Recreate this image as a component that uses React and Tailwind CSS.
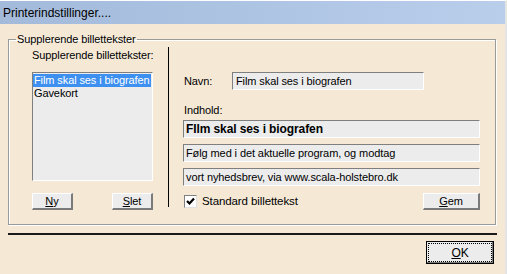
import React from 'react';

const font = { fontFamily: '"Liberation Sans", Arial, sans-serif' };

const sunken = 'border border-t-[#7f7f7f] border-l-[#7f7f7f] border-b-white border-r-white bg-[#ececec]';
const raised = 'border-t border-l border-t-white border-l-white border-r-2 border-b-2 border-r-[#7a7a7a] border-b-[#7a7a7a] bg-[#ececec]';

const Field = ({ children, bold }) => (
  <div className={`h-[18px] w-full flex items-center px-[2px] whitespace-nowrap ${sunken} ${bold ? 'font-bold text-[12px]' : ''}`}>
    {children}
  </div>
);

const Button = ({ mnemonic, rest, className = '' }) => (
  <button className={`h-[17px] flex items-center justify-center leading-none ${raised} ${className}`}>
    <span className="underline underline-offset-1">{mnemonic}</span>
    {rest}
  </button>
);

export default function App() {
  return (
    <div className="w-[507px] h-[274px] bg-[#f5e9d6] text-[11px] tracking-[-0.1px] text-black flex flex-col border-t border-t-white border-r-2 border-r-[#e4e4e4] overflow-hidden" style={font}>
      <div className="h-[23px] shrink-0 flex items-center pl-[3px] text-[12px] tracking-normal bg-gradient-to-r from-[#a4badb] to-[#b8ceeb]">
        Printerindstillinger....
      </div>

      <div className="pl-[8px] pt-[8px]">
        <fieldset className="w-[488px] h-[193px] border border-[#9a9a9a] shadow-[inset_1px_1px_0_#fff,1px_1px_0_#fff]">
          <legend className="ml-[7px] px-[1px] leading-[14px]">Supplerende billettekster</legend>
          <div className="flex">
            <div className="ml-[23px] w-[121px] flex flex-col">
              <div className="mt-[1px] h-[16px] leading-[16px] whitespace-nowrap">Supplerende billettekster:</div>
              <div className={`mt-[9px] h-[109px] ${sunken} pt-[1px] leading-[13px] whitespace-nowrap`}>
                <div className="bg-[#3d8ff0] text-white pl-[1px] h-[13px] w-fit pr-[1px]">Film skal ses i biografen</div>
                <div className="pl-[1px] h-[13px]">Gavekort</div>
              </div>
              <div className="mt-[12px] flex justify-between">
                <Button mnemonic="N" rest="y" className="w-[41px]" />
                <Button mnemonic="S" rest="let" className="w-[41px]" />
              </div>
            </div>

            <div className="ml-[15px] mt-[1px] w-px h-[160px] bg-black" />

            <div className="ml-[14px] w-[297px] flex flex-col">
              <div className="mt-[26px] flex items-start h-[18px]">
                <div className="w-[49px] pl-[1px] pt-[2px] leading-[14px]">Navn:</div>
                <div className={`h-[18px] w-[192px] flex items-center px-[3px] whitespace-nowrap ${sunken}`}>Film skal ses i biografen</div>
              </div>
              <div className="mt-[13px] h-[14px] leading-[14px] pl-[1px]">Indhold:</div>
              <div className="mt-[3px]">
                <Field bold>FIlm skal ses i biografen</Field>
              </div>
              <div className="mt-[6px]">
                <Field>Følg med i det aktuelle program, og modtag</Field>
              </div>
              <div className="mt-[6px]">
                <Field>vort nyhedsbrev, via www.scala-holstebro.dk</Field>
              </div>
              <div className="mt-[6px] flex items-start justify-between">
                <div className="flex items-center pl-[1px] pt-[1px]">
                  <div className="w-[13px] h-[13px] bg-white border border-t-[#7f7f7f] border-l-[#7f7f7f] border-b-[#e0e0e0] border-r-[#e0e0e0] flex items-center justify-center">
                    <svg width="9" height="9" viewBox="0 0 9 9">
                      <path d="M1 4 L3.5 6.5 L8 1.5" stroke="#000" strokeWidth="2.2" fill="none" />
                    </svg>
                  </div>
                  <span className="ml-[5px] text-[11.5px]">Standard billettekst</span>
                </div>
                <Button mnemonic="G" rest="em" className="w-[57px] mt-[1px]" />
              </div>
            </div>
          </div>
        </fieldset>

        <div className="mt-[8px] w-[489px] h-[2px] bg-[#1a1a1a]" />

        <div className="w-[489px] flex justify-end pr-[3px] mt-[6px] text-[12px]">
          <button className="w-[68px] h-[23px] border border-black bg-[#ececec] p-[1px] shadow-[inset_-1px_-1px_0_#7a7a7a]">
            <div className="h-full w-full border border-dotted border-black flex items-center justify-center">
              <span className="underline underline-offset-1">O</span>K
            </div>
          </button>
        </div>
      </div>
    </div>
  );
}
